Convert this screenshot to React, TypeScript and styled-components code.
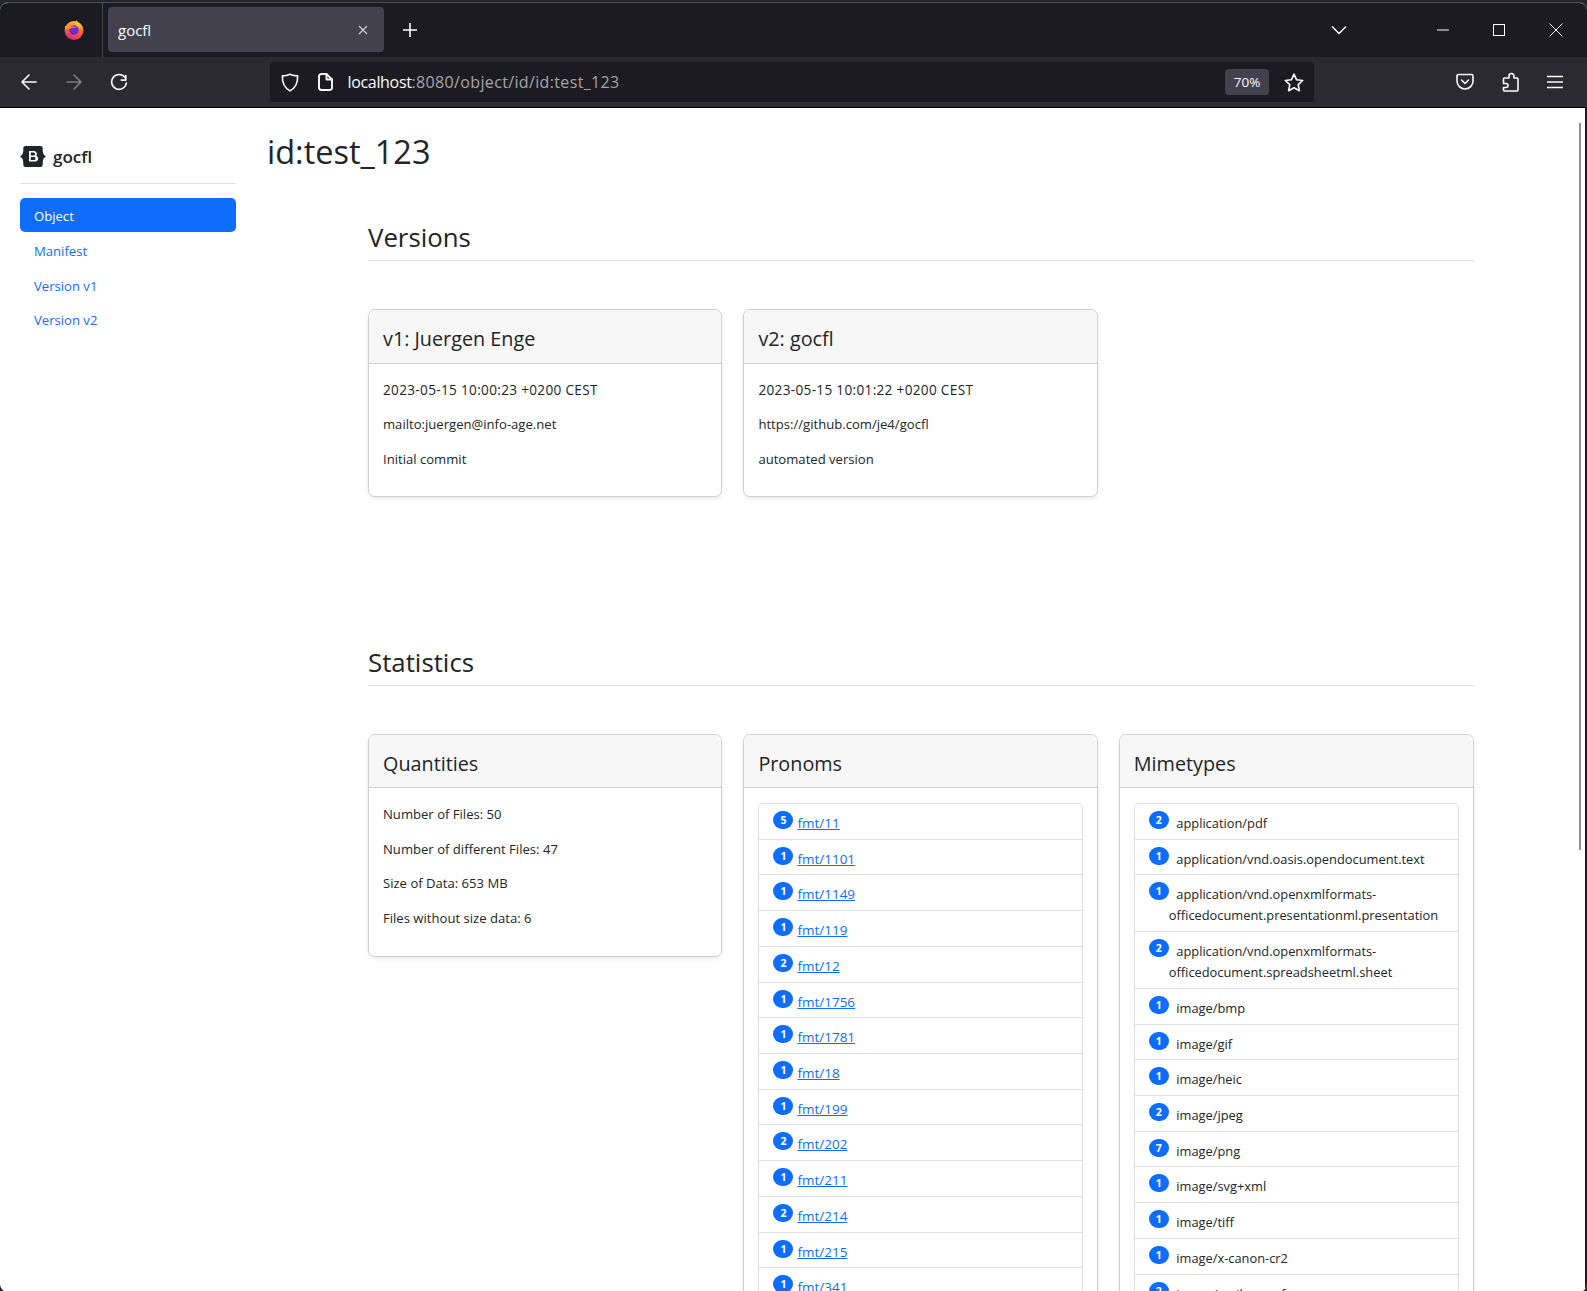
import React from 'react';
import styled, { createGlobalStyle } from 'styled-components';

const GlobalStyle = createGlobalStyle`
  html, body {
    margin: 0;
    height: 100%;
    overflow: hidden;
    background: #23252b;
  }
  body {
    font-family: "Open Sans", "Noto Sans", sans-serif;
    color: #212529;
    font-size: 14px;
  }
`;

const Desk = styled.div`
  width: 1587px;
  height: 1291px;
  padding: 2px 0 0 0;
  box-sizing: border-box;
  background: #23252b;
`;

const Browser = styled.div`
  position: relative;
  height: 1289px;
  display: flex;
  flex-direction: column;
  background: #fff;
  overflow: hidden;
  border-radius: 8px;
  border-top: 1px solid #4a4c50;
`;

const TitleBar = styled.div`
  height: 54px;
  flex: none;
  display: flex;
  align-items: center;
  background: #1c1b22;
  color: #fbfbfe;
`;

const AppMenu = styled.div`
  width: 103px;
  height: 54px;
  box-sizing: border-box;
  padding-left: 64px;
  display: flex;
  align-items: center;
  border-right: 1px solid #45454c;
`;

const Tab = styled.div`
  width: 276px;
  height: 45px;
  margin: 0 0 1px 5px;
  padding: 0 15px 0 10px;
  box-sizing: border-box;
  display: flex;
  align-items: center;
  justify-content: space-between;
  background: #42414d;
  border-radius: 4px;
  font-size: 15px;
`;

const NewTab = styled.div`
  width: 52px;
  display: flex;
  justify-content: center;
  align-items: center;
`;

const Spacer = styled.div`
  flex: 1;
`;

const WindowButtons = styled.div`
  display: flex;
  align-items: center;
  padding-right: 3px;
`;

const WindowButton = styled.div<{ $gap?: number }>`
  width: 56.5px;
  margin-right: ${(p) => p.$gap ?? 0}px;
  display: flex;
  justify-content: center;
  align-items: center;
`;

const ToolBar = styled.div`
  height: 50px;
  flex: none;
  display: flex;
  align-items: center;
  background: #2b2a33;
  border-bottom: 1px solid #000;
  color: #fbfbfe;
`;

const NavButtons = styled.div`
  display: flex;
  width: 270px;
  padding-left: 6px;
  box-sizing: border-box;
`;

const ToolButton = styled.div<{ $off?: boolean }>`
  width: 45px;
  height: 32px;
  display: flex;
  align-items: center;
  justify-content: center;
  opacity: ${(p) => (p.$off ? 0.4 : 1)};
`;

const UrlBar = styled.div`
  width: 1044px;
  height: 40px;
  display: flex;
  align-items: center;
  background: #1c1b22;
  border-radius: 4px;
  padding: 0 10px 0 11px;
  box-sizing: border-box;
`;

const UrlIcon = styled.div<{ $width: number }>`
  flex: none;
  width: ${(p) => p.$width}px;
  display: flex;
  justify-content: flex-start;
`;

const UrlText = styled.div`
  flex: 1;
  font-size: 16px;
  letter-spacing: 0.35px;
  color: #a4a4ab;
`;

const UrlHost = styled.span`
  color: #fbfbfe;
  letter-spacing: -0.33px;
`;

const Zoom = styled.div`
  width: 44px;
  height: 26px;
  display: flex;
  align-items: center;
  justify-content: center;
  background: #42414d;
  border-radius: 4px;
  font-size: 13.5px;
  margin-right: 15px;
`;

const ToolRight = styled.div`
  display: flex;
  margin-left: 128.5px;
`;

const Page = styled.div`
  flex: 1;
  min-height: 0;
  display: flex;
  overflow: hidden;
  border-right: 2px solid #1c1b22;
`;

const Sidebar = styled.aside`
  width: 216px;
  flex: none;
  padding: 36px 0 0;
  margin: 0 31px 0 20px;
`;

const Brand = styled.div`
  display: flex;
  align-items: center;
  gap: 7px;
  height: 24px;
  font-size: 17px;
  font-weight: 600;
  padding-bottom: 15px;
  border-bottom: 1px solid #dfe0e1;
  margin-bottom: 14px;
`;

const SideLink = styled.a<{ $active?: boolean }>`
  display: block;
  height: 34px;
  line-height: 36px;
  margin-bottom: 0.8px;
  padding: 0 14px;
  border-radius: 5px;
  font-size: 13.1px;
  color: ${(p) => (p.$active ? '#fff' : '#0d6efd')};
  background: ${(p) => (p.$active ? '#0d6efd' : 'transparent')};
`;

const Main = styled.main`
  flex: 1;
  min-width: 0;
`;

const Title = styled.h1`
  margin: 20px 0 0;
  font-size: 32.5px;
  font-weight: 400;
  line-height: 48px;
`;

const Content = styled.div`
  width: 1106px;
  margin-left: 101px;
`;

const SectionTitle = styled.h2`
  margin: 0;
  font-size: 25.8px;
  font-weight: 400;
  line-height: 40px;
  padding-bottom: 3px;
  border-bottom: 1px solid #dfe0e1;
`;

const Section = styled.section<{ $top: number }>`
  padding-top: ${(p) => p.$top}px;
`;

const CardGrid = styled.div`
  display: grid;
  grid-template-columns: 354.4px 354.4px 355.2px;
  column-gap: 21px;
  align-items: start;
  margin-top: 48.2px;
`;

const Card = styled.div`
  border: 1px solid #cfd0d1;
  border-radius: 7px;
  box-shadow: 0 2px 4px rgba(0, 0, 0, 0.08);
  background: #fff;
`;

const CardHeader = styled.div`
  height: 52.5px;
  line-height: 57px;
  padding: 0 14px;
  background: #f7f7f7;
  border-bottom: 1px solid #cfd0d1;
  border-radius: 6px 6px 0 0;
  font-size: 19.8px;
`;

const CardBody = styled.div`
  padding: 14.5px 14px 14px;
`;

const Line = styled.p<{ $date?: boolean }>`
  margin: 0 0 12.7px;
  padding-top: 1px;
  line-height: 21px;
  font-size: ${(p) => (p.$date ? '13.6px' : '13.1px')};
  letter-spacing: ${(p) => (p.$date ? '0.32px' : '0')};
`;

const List = styled.ul`
  margin: 0;
  padding: 0;
  list-style: none;
  border: 1px solid #dfe0e4;
  border-radius: 5px;
`;

const Item = styled.li<{ $size: number }>`
  display: flex;
  align-items: flex-start;
  padding: 9px 14px 4.74px;
  line-height: 21px;
  font-size: ${(p) => p.$size}px;
  border-bottom: 1px solid #dfe0e4;
`;

const Badge = styled.span`
  flex: none;
  width: 20px;
  height: 18px;
  margin-top: -2px;
  border-radius: 10px;
  background: #0d6efd;
  color: #fff;
  font-size: 10.5px;
  font-weight: 700;
  line-height: 18px;
  text-align: center;
`;

const FmtLink = styled.div`
  min-width: 0;
  text-indent: 4px;
`;

const FmtText = styled.a`
  color: #0d6efd;
  text-decoration: underline;
`;

const Mime = styled.div`
  min-width: 0;
  text-indent: 7.5px;
`;

const Scrollbar = styled.div`
  position: absolute;
  right: 6px;
  top: 120px;
  width: 2px;
  height: 727px;
  background: #8e8e8e;
`;

const stroke = {
  fill: 'none',
  stroke: 'currentColor',
  strokeWidth: 1.6,
  strokeLinecap: 'round' as const,
  strokeLinejoin: 'round' as const,
};

const FirefoxLogo = () => (
  <svg width="20" height="20" viewBox="0 0 20 20">
    <defs>
      <linearGradient id="ffOuter" x1="0.65" y1="0" x2="0.35" y2="1">
        <stop offset="0" stopColor="#ffc62e" />
        <stop offset="0.45" stopColor="#ff6a2f" />
        <stop offset="1" stopColor="#e5217f" />
      </linearGradient>
      <linearGradient id="ffFlame" x1="0.5" y1="0" x2="0.5" y2="1">
        <stop offset="0" stopColor="#ffe14a" />
        <stop offset="1" stopColor="#ff9a2a" />
      </linearGradient>
    </defs>
    <circle cx="10" cy="10.5" r="9.4" fill="url(#ffOuter)" />
    <path d="M12.5 0c0.3 2 1.5 3 3.2 4.3 1.7 1.4 3.4 3.5 3.7 6.1-1.7-3.1-4.2-4-6.3-4.4-1.8-0.4-1.9-3.6-0.6-6z" fill="url(#ffFlame)" />
    <path d="M1 5.5l1.5 1.3 1-2.3 1.7 1.4 2-1c-0.7 1.5-2.5 3.5-5 4.3L1 9z" fill="#ff9a2a" />
    <circle cx="10" cy="10.3" r="4.7" fill="#6a2dc4" />
    <path d="M5.4 9.5c1.3-2 3.9-2.7 6.6-1.6-1.4-2-5-2-6.6 0.3z" fill="#ff9a2a" />
  </svg>
);

const CloseIcon = () => (
  <svg width="12" height="12" viewBox="0 0 12 12" style={{ color: '#d0d0d4' }}>
    <path d="M2 2l8 8M10 2l-8 8" stroke="currentColor" strokeWidth="1.1" />
  </svg>
);

const PlusIcon = () => (
  <svg width="16" height="16" viewBox="0 0 16 16">
    <path d="M8 1v14M1 8h14" stroke="currentColor" strokeWidth="1.6" />
  </svg>
);

const ChevronIcon = () => (
  <svg width="16" height="10" viewBox="0 0 16 10">
    <path d="M1 1.5l7 7 7-7" fill="none" stroke="currentColor" strokeWidth="1.5" />
  </svg>
);

const MinIcon = () => (
  <svg width="12" height="12" viewBox="0 0 12 12">
    <path d="M0 6h12" stroke="currentColor" strokeWidth="1" />
  </svg>
);

const MaxIcon = () => (
  <svg width="12" height="12" viewBox="0 0 12 12">
    <rect x="0.5" y="0.5" width="11" height="11" fill="none" stroke="currentColor" strokeWidth="1" />
  </svg>
);

const XIcon = () => (
  <svg width="14" height="14" viewBox="0 0 14 14">
    <path d="M0.5 0.5l13 13M13.5 0.5l-13 13" stroke="currentColor" strokeWidth="1" />
  </svg>
);

const BackIcon = () => (
  <svg width="18" height="18" viewBox="0 0 18 18">
    <path d="M16 9H2M9 2L2 9l7 7" {...stroke} />
  </svg>
);

const ForwardIcon = () => (
  <svg width="18" height="18" viewBox="0 0 18 18">
    <path d="M2 9h14M9 2l7 7-7 7" {...stroke} />
  </svg>
);

const ReloadIcon = () => (
  <svg width="18" height="18" viewBox="0 -1 18 18">
    <path d="M15 3.5a7.4 7.4 0 1 0 1.4 5.5" {...stroke} />
    <path d="M15.8 1.5v4.6h-4.6" {...stroke} />
  </svg>
);

const ShieldIcon = () => (
  <svg width="18" height="19" viewBox="0 0 18 19">
    <path d="M9 1.2c2.2 1 4.9 1.6 7.6 1.7 0.3 6.4-2 11.9-7.6 15-5.6-3.1-7.9-8.6-7.6-15 2.7-0.1 5.4-0.7 7.6-1.7z" {...stroke} />
  </svg>
);

const PageIcon = () => (
  <svg width="15" height="18" viewBox="0 0 15 18">
    <path d="M3.5 1h5l5.5 5.5v8a2.5 2.5 0 0 1-2.5 2.5h-8a2.5 2.5 0 0 1-2.5-2.5v-11a2.5 2.5 0 0 1 2.5-2.5z" {...stroke} strokeWidth={1.9} />
    <path d="M8.5 1v5.5H14" {...stroke} strokeWidth={1.9} />
  </svg>
);

const StarIcon = () => (
  <svg width="20" height="19" viewBox="0 0 20 19">
    <path d="M10 1.2l2.6 5.6 6.1 0.7-4.5 4.2 1.2 6-5.4-3-5.4 3 1.2-6-4.5-4.2 6.1-0.7z" {...stroke} />
  </svg>
);

const PocketIcon = () => (
  <svg width="18" height="18" viewBox="0 0 18 18">
    <path d="M2.5 1.5h13a1.5 1.5 0 0 1 1.5 1.5v5a8 8 0 0 1-16 0V3a1.5 1.5 0 0 1 1.5-1.5z" {...stroke} />
    <path d="M5.5 7l3.5 3.5L12.5 7" {...stroke} />
  </svg>
);

const PuzzleIcon = () => (
  <svg width="18" height="20" viewBox="0 0 18 20">
    <path d="M8 6V4a2.5 2.5 0 0 1 5 0v2h3a1 1 0 0 1 1 1v11a1 1 0 0 1-1 1H3.5a1 1 0 0 1-1-1v-2.5H5a2 2 0 0 0 0-4H2.5V7a1 1 0 0 1 1-1z" {...stroke} />
  </svg>
);

const MenuIcon = () => (
  <svg width="16" height="14" viewBox="0 0 16 14">
    <path d="M0.5 1.5h15M0.5 7h15M0.5 12.5h15" {...stroke} />
  </svg>
);

const BootstrapLogo = () => (
  <svg width="26" height="21" viewBox="0 0 26 21">
    <path d="M5.5 0h15a2.2 2.2 0 0 1 2.2 2.3c-0.1 1.5 0 3.3 0.4 4.8 0.4 1.5 1.2 2.5 2.4 2.7v1.4c-1.2 0.2-2 1.2-2.4 2.7-0.4 1.5-0.5 3.3-0.4 4.8A2.2 2.2 0 0 1 20.5 21h-15a2.2 2.2 0 0 1-2.2-2.3c0.1-1.5 0-3.3-0.4-4.8-0.4-1.5-1.2-2.5-2.4-2.7V9.8c1.2-0.2 2-1.2 2.4-2.7 0.4-1.5 0.5-3.3 0.4-4.8A2.2 2.2 0 0 1 5.5 0z" fill="#212529" />
    <path fillRule="evenodd" d="M9 5h5a3 3 0 0 1 2.3 4.8 3 3 0 0 1-1.8 5.7H9zM10.8 6.5v3h2.8a1.5 1.5 0 0 0 0-3zM10.800 11v3h3.200a1.500 1.500 0 0 0 0-3z" fill="#fff" />
  </svg>
);

const pronoms: [number, string][] = [
  [5, 'fmt/11'], [1, 'fmt/1101'], [1, 'fmt/1149'], [1, 'fmt/119'], [2, 'fmt/12'],
  [1, 'fmt/1756'], [1, 'fmt/1781'], [1, 'fmt/18'], [1, 'fmt/199'], [2, 'fmt/202'],
  [1, 'fmt/211'], [2, 'fmt/214'], [1, 'fmt/215'], [1, 'fmt/341'],
];

const mimetypes: [number, string][] = [
  [2, 'application/pdf'],
  [1, 'application/vnd.oasis.opendocument.text'],
  [1, 'application/vnd.openxmlformats-officedocument.presentationml.presentation'],
  [2, 'application/vnd.openxmlformats-officedocument.spreadsheetml.sheet'],
  [1, 'image/bmp'], [1, 'image/gif'], [1, 'image/heic'], [2, 'image/jpeg'], [7, 'image/png'],
  [1, 'image/svg+xml'], [1, 'image/tiff'], [1, 'image/x-canon-cr2'], [2, 'image/x-nikon-nef'],
];

export default function App() {
  return (
    <>
      <GlobalStyle />
      <Desk>
        <Browser>
          <TitleBar>
            <AppMenu><FirefoxLogo /></AppMenu>
            <Tab>gocfl<CloseIcon /></Tab>
            <NewTab><PlusIcon /></NewTab>
            <Spacer />
            <WindowButtons>
              <WindowButton $gap={47}><ChevronIcon /></WindowButton>
              <WindowButton><MinIcon /></WindowButton>
              <WindowButton><MaxIcon /></WindowButton>
              <WindowButton><XIcon /></WindowButton>
            </WindowButtons>
          </TitleBar>
          <ToolBar>
            <NavButtons>
              <ToolButton><BackIcon /></ToolButton>
              <ToolButton $off><ForwardIcon /></ToolButton>
              <ToolButton><ReloadIcon /></ToolButton>
            </NavButtons>
            <UrlBar>
              <UrlIcon $width={36.5}><ShieldIcon /></UrlIcon>
              <UrlIcon $width={30}><PageIcon /></UrlIcon>
              <UrlText><UrlHost>localhost</UrlHost>:8080/object/id/id:test_123</UrlText>
              <Zoom>70%</Zoom>
              <StarIcon />
            </UrlBar>
            <ToolRight>
              <ToolButton><PocketIcon /></ToolButton>
              <ToolButton><PuzzleIcon /></ToolButton>
              <ToolButton><MenuIcon /></ToolButton>
            </ToolRight>
          </ToolBar>
          <Page>
            <Sidebar>
              <Brand><BootstrapLogo />gocfl</Brand>
              <SideLink $active>Object</SideLink>
              <SideLink>Manifest</SideLink>
              <SideLink>Version v1</SideLink>
              <SideLink>Version v2</SideLink>
            </Sidebar>
            <Main>
              <Title>id:test_123</Title>
              <Content>
                <Section $top={41}>
                  <SectionTitle>Versions</SectionTitle>
                  <CardGrid>
                    <Card>
                      <CardHeader>v1: Juergen Enge</CardHeader>
                      <CardBody>
                        <Line $date>2023-05-15 10:00:23 +0200 CEST</Line>
                        <Line>mailto:juergen@info-age.net</Line>
                        <Line>Initial commit</Line>
                      </CardBody>
                    </Card>
                    <Card>
                      <CardHeader>v2: gocfl</CardHeader>
                      <CardBody>
                        <Line $date>2023-05-15 10:01:22 +0200 CEST</Line>
                        <Line>https://github.com/je4/gocfl</Line>
                        <Line>automated version</Line>
                      </CardBody>
                    </Card>
                  </CardGrid>
                </Section>
                <Section $top={144.4}>
                  <SectionTitle>Statistics</SectionTitle>
                  <CardGrid>
                    <Card>
                      <CardHeader>Quantities</CardHeader>
                      <CardBody>
                        <Line>Number of Files: 50</Line>
                        <Line>Number of different Files: 47</Line>
                        <Line>Size of Data: 653 MB</Line>
                        <Line>Files without size data: 6</Line>
                      </CardBody>
                    </Card>
                    <Card>
                      <CardHeader>Pronoms</CardHeader>
                      <CardBody>
                        <List>
                          {pronoms.map(([count, name]) => (
                            <Item key={name} $size={13.5}>
                              <Badge>{count}</Badge>
                              <FmtLink><FmtText>{name}</FmtText></FmtLink>
                            </Item>
                          ))}
                        </List>
                      </CardBody>
                    </Card>
                    <Card>
                      <CardHeader>Mimetypes</CardHeader>
                      <CardBody>
                        <List>
                          {mimetypes.map(([count, name]) => (
                            <Item key={name} $size={12.85}>
                              <Badge>{count}</Badge>
                              <Mime>{name}</Mime>
                            </Item>
                          ))}
                        </List>
                      </CardBody>
                    </Card>
                  </CardGrid>
                </Section>
              </Content>
            </Main>
          </Page>
          <Scrollbar />
        </Browser>
      </Desk>
    </>
  );
}
